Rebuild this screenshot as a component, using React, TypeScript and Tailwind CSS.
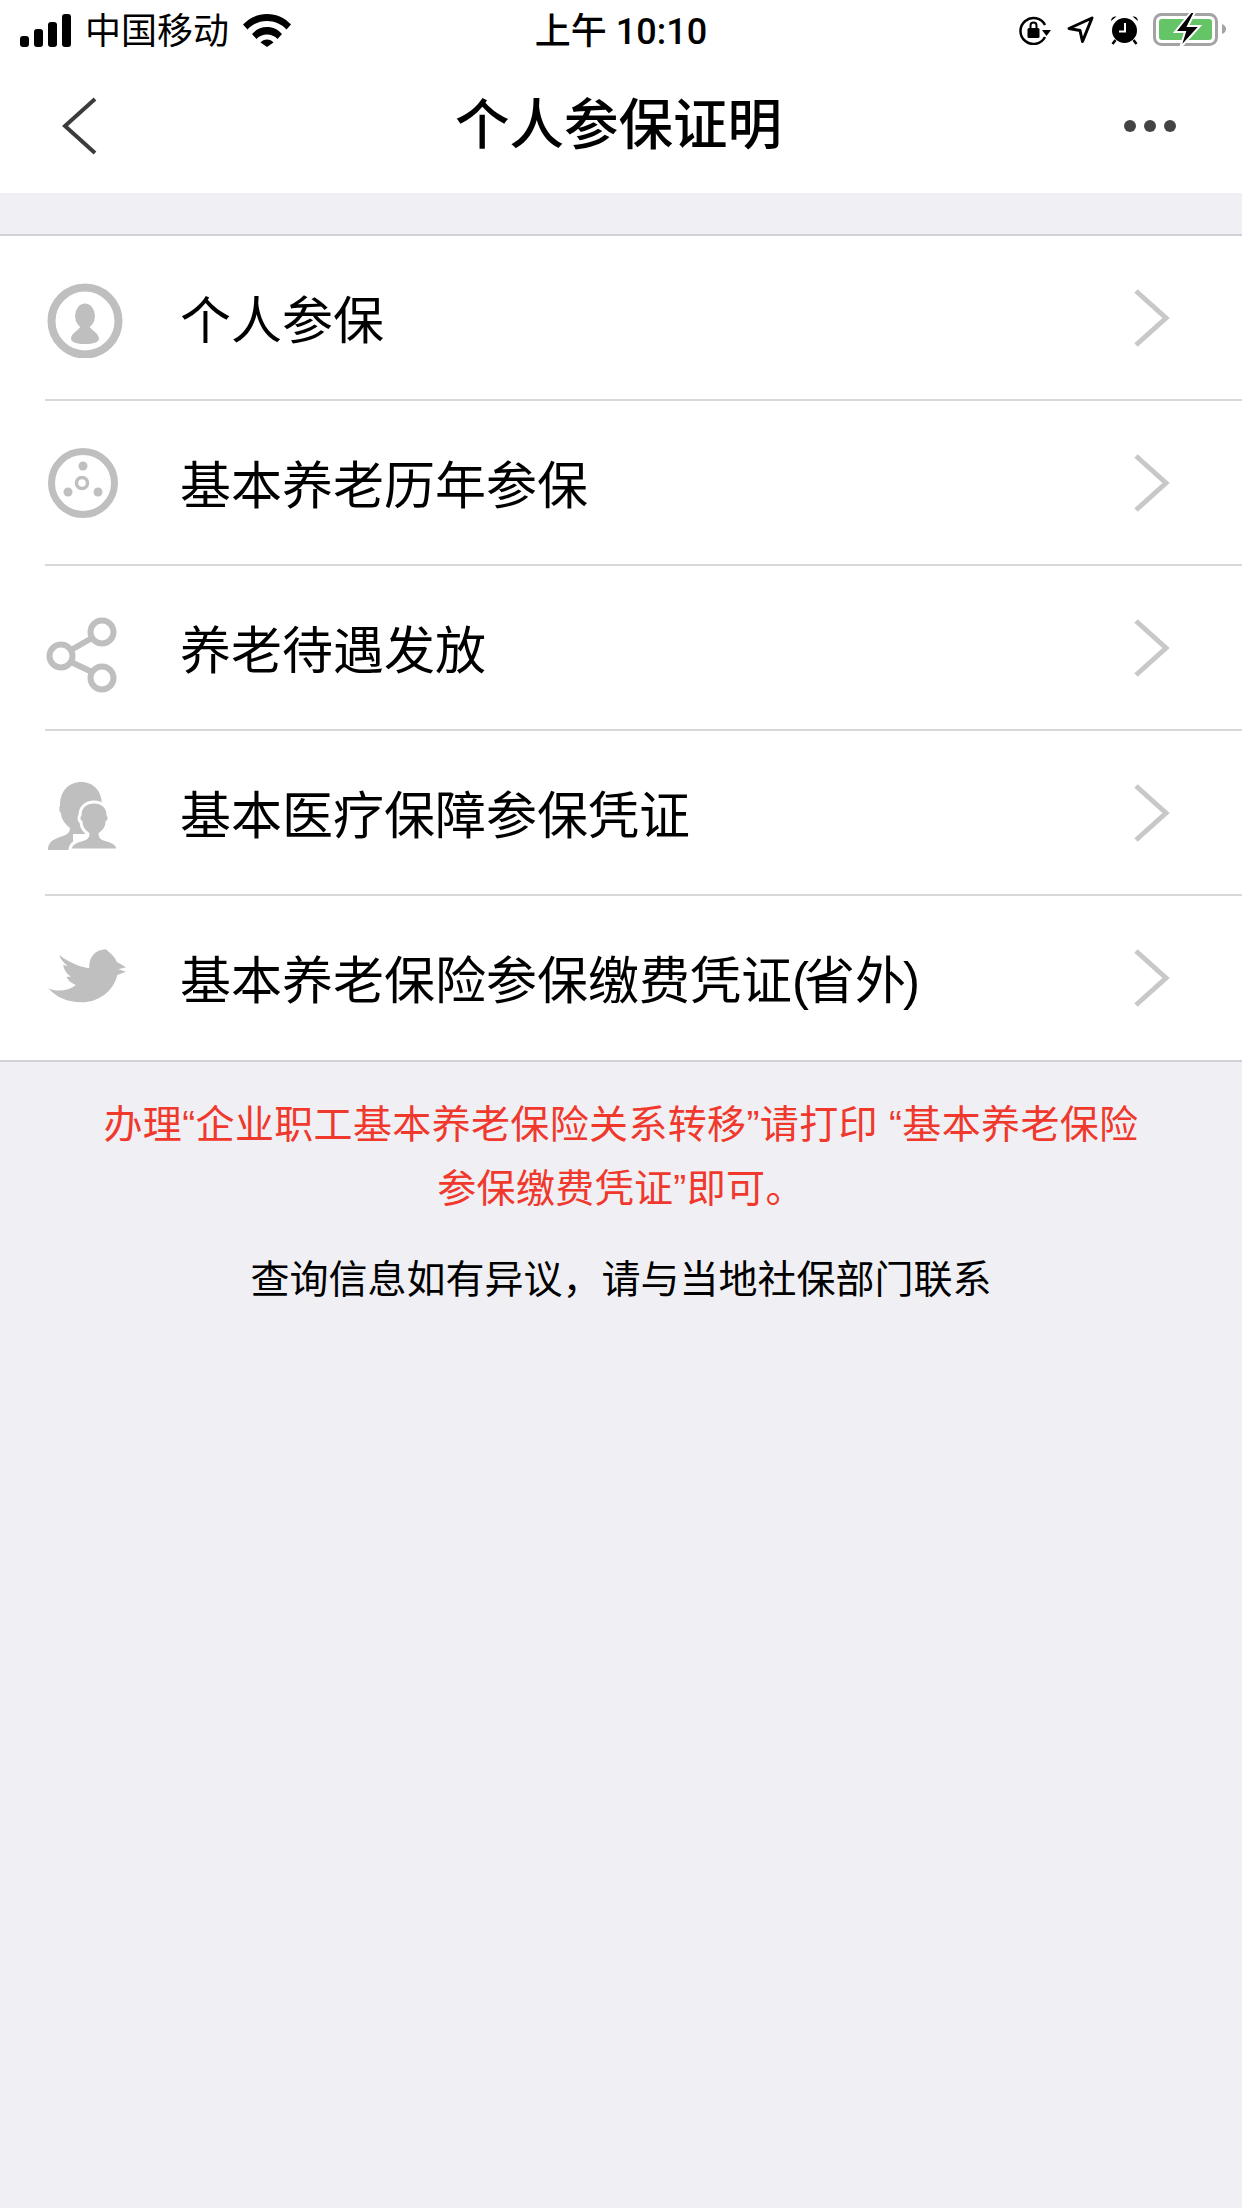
const GRAY = "#bfbfbf"

function SignalIcon() {
  return (
    <svg width="51" height="33" viewBox="0 0 51 33" fill="#000">
      <rect x="0" y="22" width="9" height="11" rx="3" />
      <rect x="14" y="15" width="9" height="18" rx="3" />
      <rect x="28" y="8" width="9" height="25" rx="3" />
      <rect x="42" y="0" width="9" height="33" rx="3" />
    </svg>
  )
}

function WifiIcon() {
  return (
    <svg width="48" height="33" viewBox="0 0 48 33" fill="#000">
      <path d="M0 10.500C6 4 14.500 0 24 0s18 4 24 10.500l-4.500 5C38.500 10 31.500 7 24 7S9.500 10 4.500 15.500z" />
      <path d="M9 20C13 15.500 18 13 24 13s11 2.500 15 7l-4.500 5C32 22 28 20.500 24 20.500S16 22 13.500 25z" />
      <path d="M17.500 28.500C19 26.500 21.500 25.500 24 25.500s5 1 6.500 3L24 33z" />
    </svg>
  )
}

function RotationLockIcon() {
  return (
    <svg width="33" height="30" viewBox="0 0 33 30" fill="none">
      <path d="M27 21A13 13 0 1 1 27 9" stroke="#000" strokeWidth="2.500" transform="translate(0 1)" />
      <path d="M24 15h9l-4.500 6z" fill="#000" />
      <rect x="9.500" y="13" width="12" height="10" rx="1.500" fill="#000" />
      <path d="M12.500 13v-2.500a3 3 0 0 1 6 0V13" stroke="#000" strokeWidth="2" />
    </svg>
  )
}

function LocationIcon() {
  return (
    <svg width="27" height="28" viewBox="0 0 27 28" fill="none">
      <path d="M25 2L2 12.500l11 2 2.500 11z" stroke="#000" strokeWidth="3" strokeLinejoin="round" />
    </svg>
  )
}

function AlarmIcon() {
  return (
    <svg width="29" height="30" viewBox="0 0 29 30" fill="#000">
      <circle cx="14.500" cy="15.500" r="12.500" />
      <path d="M1 6C1 3 3.500 1 6.500 1.500zM28 6C28 3 25.500 1 22.500 1.500z" />
      <path d="M5.500 25l-3 4M23.500 25l3 4" stroke="#000" strokeWidth="2.500" />
      <path d="M15 8v8.500H9" stroke="#fff" strokeWidth="2" fill="none" />
    </svg>
  )
}

function BatteryIcon() {
  return (
    <svg width="74" height="38" viewBox="0 0 74 38" fill="none">
      <rect x="1.500" y="3.500" width="62" height="30" rx="7" stroke="#a3a3a3" strokeWidth="3" />
      <rect x="6" y="8" width="53" height="21" rx="3" fill="#65c466" />
      <path d="M69 13c3 1 4 3 4 5s-1 4-4 5z" fill="#a3a3a3" />
      <path d="M38 1L22 21h10l-5 16 20-22H35l7-14z" fill="#000" stroke="#fff" strokeWidth="2" />
    </svg>
  )
}

function StatusBar() {
  return (
    <div className="h-[60px] grid grid-cols-[1fr_auto_1fr] items-center text-black">
      <div className="flex items-center pl-[20px]">
        <SignalIcon />
        <span className="ml-[14px] pt-[4px] text-[36px] leading-none">中国移动</span>
        <span className="ml-[14px]">
          <WifiIcon />
        </span>
      </div>
      <div className="pt-[4px] text-[36px] leading-none font-medium [font-family:Roboto,'Noto_Sans_CJK_SC',sans-serif]">
        上午 10:10
      </div>
      <div className="flex items-center justify-end pr-[15px] gap-[16px]">
        <RotationLockIcon />
        <LocationIcon />
        <AlarmIcon />
        <span className="-ml-[2px]">
          <BatteryIcon />
        </span>
      </div>
    </div>
  )
}

function NavBar() {
  return (
    <div className="h-[133px] pb-[1px] grid grid-cols-[1fr_auto_1fr] items-center pl-[61px] pr-[66px]">
      <svg width="37" height="58" viewBox="0 0 37 58" fill="none">
        <path d="M34 2L4 29l30 27" stroke="#3c3c3c" strokeWidth="4" />
      </svg>
      <h1 className="text-[54.5px] leading-none font-medium text-black">个人参保证明</h1>
      <div className="flex justify-end gap-[8px]">
        <span className="w-[12px] h-[12px] rounded-full bg-[#444]" />
        <span className="w-[12px] h-[12px] rounded-full bg-[#444]" />
        <span className="w-[12px] h-[12px] rounded-full bg-[#444]" />
      </div>
    </div>
  )
}

function PersonCircleIcon() {
  return (
    <svg width="84" height="80" viewBox="0 0 84 80" fill="none">
      <circle cx="40" cy="43" r="33.500" stroke={GRAY} strokeWidth="8" />
      <ellipse cx="40" cy="38" rx="10" ry="12.500" fill={GRAY} />
      <path d="M26 61c0-6 7-8 10-13h8c3 5 10 7 10 13 0 3-6 5-14 5s-14-2-14-5z" fill={GRAY} />
    </svg>
  )
}

function DotsCircleIcon() {
  return (
    <svg width="84" height="80" viewBox="0 0 84 80" fill="none">
      <circle cx="38" cy="40" r="31.500" stroke={GRAY} strokeWidth="7" />
      <circle cx="37" cy="40" r="5.500" stroke={GRAY} strokeWidth="3.500" />
      <circle cx="38" cy="23" r="4.500" fill={GRAY} />
      <circle cx="23" cy="49" r="4.500" fill={GRAY} />
      <circle cx="53" cy="49" r="4.500" fill={GRAY} />
    </svg>
  )
}

function ShareIcon() {
  return (
    <svg width="84" height="80" viewBox="0 0 84 80" fill="none" stroke={GRAY} strokeWidth="6" className="overflow-visible">
      <circle cx="57" cy="24" r="11.500" />
      <circle cx="16" cy="48" r="11.500" />
      <circle cx="57" cy="70" r="11.500" />
      <path d="M26 42l21-12M26 54l21 10" />
    </svg>
  )
}

function PeopleIcon() {
  return (
    <svg width="84" height="80" viewBox="0 0 84 80" fill={GRAY}>
      <path d="M3 77c0-9 6-11 15-14 5-2 7-4 7-8-5-4-9-9-9-15-2-1-2-5-1-8 0-14 9-23 21-23 13 0 21 9 21 24v28H28v16z" />
      <path
        d="M25 77c0-7 7-9 14-11 3-1 4-3 4-5-4-3-7-7-7-12-2-1-3-5-1-7 0-8 6-13 14-13s14 5 14 13c2 2 1 6-1 7 0 5-3 9-7 12 0 2 1 4 4 5 7 2 14 4 14 11z"
        stroke="#fff"
        strokeWidth="3"
      />
    </svg>
  )
}

function BirdIcon() {
  return (
    <svg width="84" height="80" viewBox="0 0 84 80" fill={GRAY}>
      <path
        transform="translate(-45 -348) scale(.3333)"
        d="M145 1195C170 1207 205 1203 228 1185C212 1178 205 1172 200 1160L213 1160C198 1150 190 1135 190 1125L203 1128C188 1115 180 1105 178 1095C205 1115 235 1130 268 1135C265 1105 285 1078 318 1078C330 1090 345 1100 350 1115L378 1132L355 1138L378 1145L352 1155C340 1205 295 1237 245 1237C200 1237 170 1222 145 1195Z"
      />
    </svg>
  )
}

function Chevron() {
  return (
    <svg width="36" height="58" viewBox="0 0 36 58" fill="none">
      <path d="M2 2l30 27L2 56" stroke="#c8c8c8" strokeWidth="5" />
    </svg>
  )
}

const rows = [
  { icon: <PersonCircleIcon />, label: "个人参保" },
  { icon: <DotsCircleIcon />, label: "基本养老历年参保" },
  { icon: <ShareIcon />, label: "养老待遇发放" },
  { icon: <PeopleIcon />, label: "基本医疗保障参保凭证" },
  {
    icon: <BirdIcon />,
    label: (
      <>
        基本养老保险参保缴费凭证<span className="tracking-[-5px]">(</span>省外<span className="-ml-[3px]">)</span>
      </>
    ),
  },
]

export default function App() {
  return (
    <main className="min-h-[2208px] bg-[#efeff4] [font-family:'Liberation_Sans','Noto_Sans_CJK_SC',sans-serif]">
      <div className="bg-white">
        <StatusBar />
        <NavBar />
      </div>

      <div className="mt-[41px] bg-white border-t-2 border-b-2 border-[#d2d2d6]">
        {rows.map((row, i) => (
          <div
            key={i}
            className={
              i < rows.length - 1
                ? "ml-[45px] h-[165px] pr-[72px] flex items-center border-b-2 border-[#d8d8d8]"
                : "ml-[45px] h-[164px] pr-[72px] flex items-center"
            }
          >
            <div className="w-[135px] shrink-0">{row.icon}</div>
            <span className="flex-1 pt-[7px] text-[51px] leading-none text-black">{row.label}</span>
            <Chevron />
          </div>
        ))}
      </div>

      <div className="px-[90px] pt-[31px] text-center text-[39px] leading-[64px] tracking-[0.35px] text-[#f0382c]">
        办理“企业职工基本养老保险关系转移”请打印 “基本养老保险参保缴费凭证”即可。
      </div>
      <p className="mt-[27px] text-center text-[39px] leading-[64px] text-black">
        查询信息如有异议，请与当地社保部门联系
      </p>
    </main>
  )
}
